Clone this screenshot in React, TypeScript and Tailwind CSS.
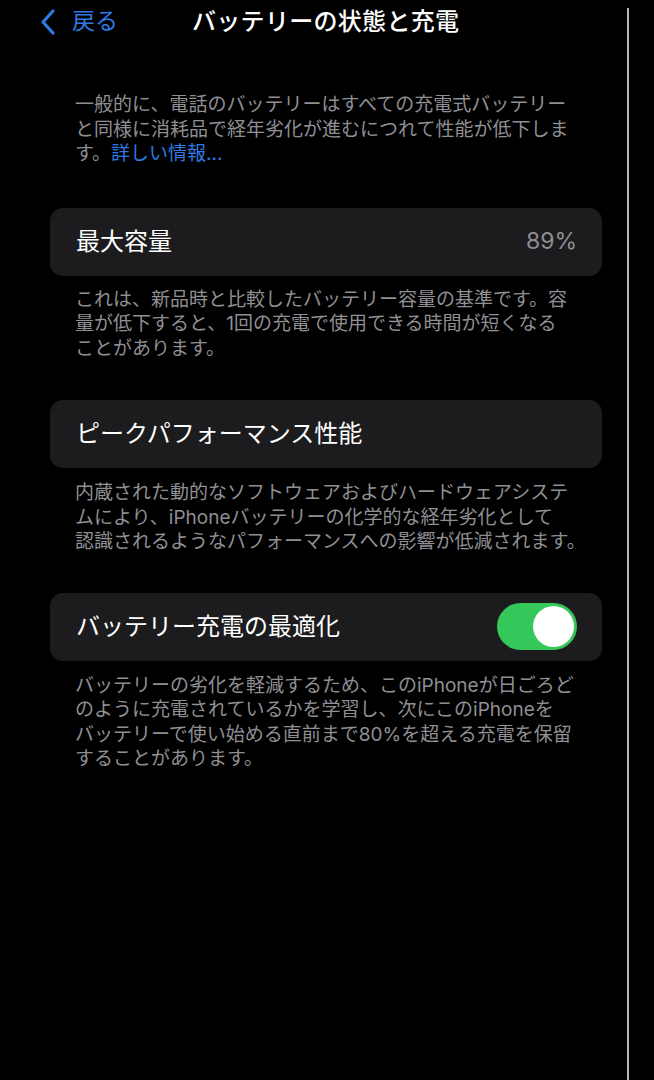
const font = { fontFamily: '"Inter", "Noto Sans CJK JP", sans-serif' };

const Footnote = ({ lines }: { lines: React.ReactNode[] }) => (
  <div className="px-[75px] text-[19px] leading-[24.5px] text-[#8f8f94] whitespace-nowrap">
    {lines.map((l, i) => (
      <div key={i}>{l}</div>
    ))}
  </div>
);

const Row = ({ children }: { children: React.ReactNode }) => (
  <div className="ml-[50px] mr-[25px] h-[68px] rounded-[13px] bg-[#1c1c1e] pl-[26px] pr-[25px] flex items-center justify-between">
    {children}
  </div>
);

// back chevron, drawn taller than lucide's
const BackChevron = () => (
  <svg width="20" height="28" viewBox="0 0 20 28" fill="none">
    <path
      d="M15 3 L5 14 L15 25"
      stroke="currentColor"
      strokeWidth="3.2"
      strokeLinecap="round"
      strokeLinejoin="round"
    />
  </svg>
);

export default function App() {
  return (
    <div className="w-[654px] h-[1080px] bg-black flex overflow-hidden" style={font}>
      <div className="w-[627px] flex flex-col">
        <header className="h-[42px] flex items-center pt-[1px]">
          <div className="flex items-center text-[#2f7ae5] pl-[38px]">
            <BackChevron />
            <span className="ml-[14px] text-[23px]">戻る</span>
          </div>
          <h1 className="ml-[74px] text-[24px] font-medium text-white tracking-[0.3px]">
            バッテリーの状態と充電
          </h1>
        </header>

        <div className="mt-[51px]">
          <Footnote
            lines={[
              "一般的に、電話のバッテリーはすべての充電式バッテリー",
              "と同様に消耗品で経年劣化が進むにつれて性能が低下しま",
              <>
                す。<span className="text-[#2f7ae5]">詳しい情報...</span>
              </>,
            ]}
          />
        </div>

        <div className="mt-[41px]">
          <Row>
            <span className="text-[24px] text-white">最大容量</span>
            <span className="text-[23px] text-[#8f8f94]">89%</span>
          </Row>
        </div>

        <div className="mt-[12px]">
          <Footnote
            lines={[
              "これは、新品時と比較したバッテリー容量の基準です。容",
              "量が低下すると、1回の充電で使用できる時間が短くなる",
              "ことがあります。",
            ]}
          />
        </div>

        <div className="mt-[39px]">
          <Row>
            <span className="text-[24px] text-white">ピークパフォーマンス性能</span>
          </Row>
        </div>

        <div className="mt-[13px]">
          <Footnote
            lines={[
              "内蔵された動的なソフトウェアおよびハードウェアシステ",
              "ムにより、iPhoneバッテリーの化学的な経年劣化として",
              "認識されるようなパフォーマンスへの影響が低減されます。",
            ]}
          />
        </div>

        <div className="mt-[38px]">
          <Row>
            <span className="text-[24px] text-white">バッテリー充電の最適化</span>
            <div className="w-[80px] h-[47px] rounded-full bg-[#34c759] flex items-center justify-end pr-[3px]">
              <div className="w-[41px] h-[41px] rounded-full bg-white" />
            </div>
          </Row>
        </div>

        <div className="mt-[13px]">
          <Footnote
            lines={[
              "バッテリーの劣化を軽減するため、このiPhoneが日ごろど",
              "のように充電されているかを学習し、次にこのiPhoneを",
              "バッテリーで使い始める直前まで80%を超える充電を保留",
              "することがあります。",
            ]}
          />
        </div>
      </div>

      <div className="w-[2px] mt-[8px] bg-[#b5b5b5]" />
    </div>
  );
}
